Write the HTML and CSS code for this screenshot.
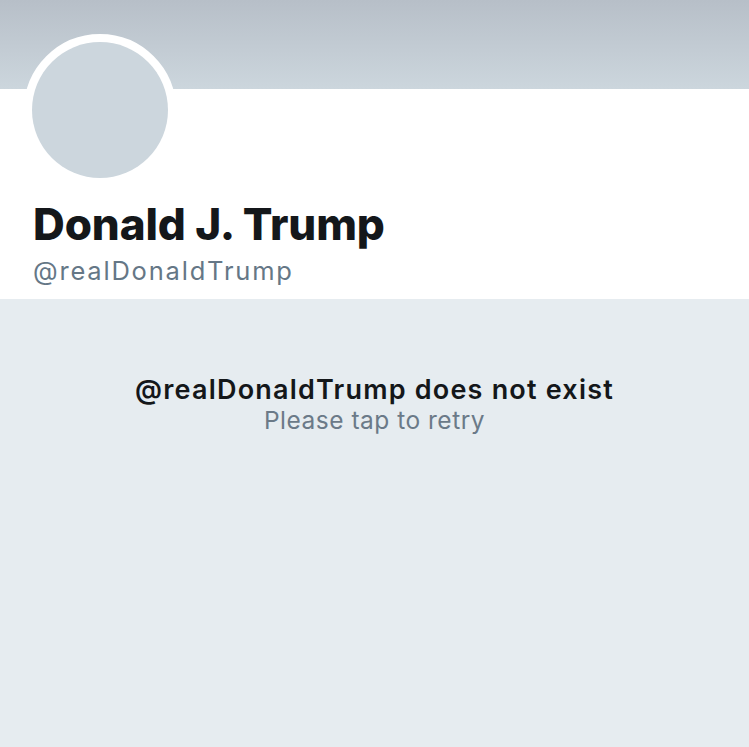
FILE: index.html
```html
<!DOCTYPE html>
<html lang="en">
<head>
<meta charset="utf-8">
<title>Donald J. Trump</title>
<link rel="stylesheet" href="styles.css">
</head>
<body>
<div class="page">
  <section class="profile">
    <div class="banner"></div>
    <div class="info">
      <div class="avatar"><div class="avatar-inner"></div></div>
      <h1 class="name">Donald J. Trump</h1>
      <div class="handle">@realDonaldTrump</div>
    </div>
  </section>
  <section class="empty">
    <div class="empty-title">@realDonaldTrump does not exist</div>
    <div class="empty-sub">Please tap to retry</div>
  </section>
</div>
</body>
</html>
```
FILE: styles.css
```css
html, body {
  margin: 0;
  padding: 0;
  height: 100%;
}
body {
  font-family: Inter, "Noto Sans", "Liberation Sans", sans-serif;
  background: #e6ecf0;
}
.page {
  display: flex;
  flex-direction: column;
  min-height: 100%;
}
.profile {
  background: #ffffff;
}
.banner {
  height: 89px;
  background: linear-gradient(to bottom, #b7bfc8 0%, #ccd6dd 100%);
}
.info {
  padding: 0 0 13px 33px;
  display: flex;
  flex-direction: column;
  align-items: flex-start;
}
.avatar {
  margin: -55px 0 0 -9px;
  width: 136px;
  height: 136px;
  border: 8px solid #ffffff;
  border-radius: 50%;
  background: #ffffff;
}
.avatar-inner {
  width: 100%;
  height: 100%;
  border-radius: 50%;
  background: #ccd6dd;
}
.name {
  margin: 13px 0 0 0;
  font-size: 44px;
  line-height: 50px;
  font-weight: 800;
  color: #14171a;
  letter-spacing: -0.1px;
}
.handle {
  margin: 7px 0 0 0;
  font-size: 25.5px;
  line-height: 30px;
  color: #657786;
  letter-spacing: 1.8px;
}
.empty {
  flex: 1;
  display: flex;
  flex-direction: column;
  align-items: center;
  padding-top: 75px;
}
.empty-title {
  font-size: 27px;
  line-height: 32px;
  font-weight: 600;
  color: #14171a;
  letter-spacing: 1.2px;
}
.empty-sub {
  font-size: 24.5px;
  line-height: 28px;
  color: #6b7a88;
  letter-spacing: 0.5px;
}
```
